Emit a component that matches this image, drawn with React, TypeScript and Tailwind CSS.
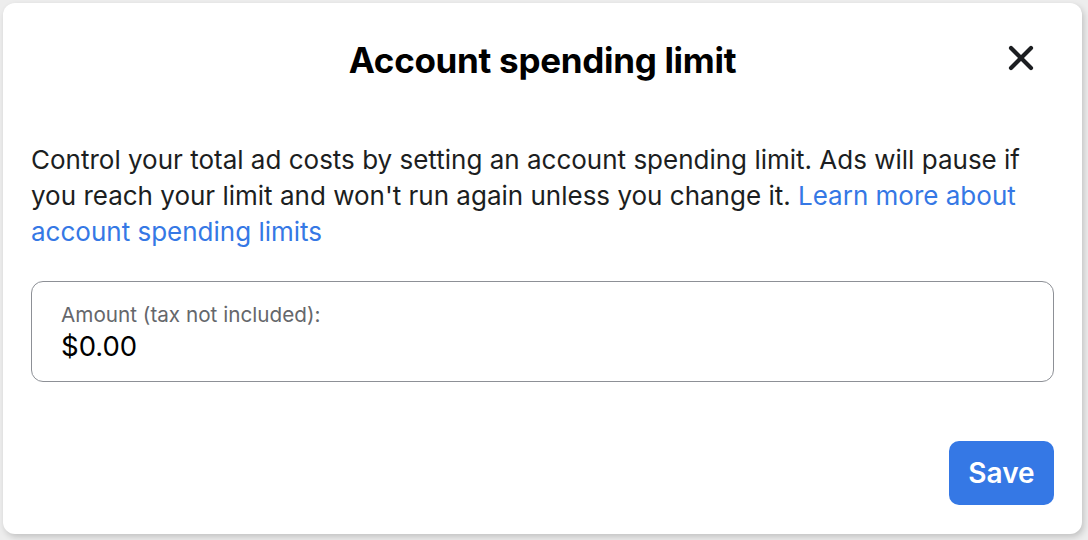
import { X } from 'lucide-react';

export default function App() {
    return (
        <div
            className="h-[540px] w-[1088px] overflow-hidden bg-[#ededed] pl-[3px] pt-[3px] text-[#1c1e21]"
            style={{ fontFamily: 'Inter, "Liberation Sans", Arial, sans-serif' }}
        >
            <div className="flex h-[531px] w-[1079px] flex-col rounded-[12px] bg-white px-[28px] shadow-[2px_3px_6px_rgba(0,0,0,0.18)]">
                <div className="grid h-[114px] grid-cols-[1fr_auto_1fr] items-center">
                    <div />
                    <h2 className="text-[35px] font-bold leading-[40px] tracking-[-0.3px] text-black">Account spending limit</h2>
                    <div className="mb-[5px] flex justify-end pr-[13px]">
                        <button className="flex h-[40px] w-[40px] items-center justify-center">
                            <X className="h-[40px] w-[40px]" strokeWidth={2.5} />
                        </button>
                    </div>
                </div>

                <p className="mt-[25px] text-[26px] leading-[36px]">
                    Control your total ad costs by setting an account spending limit. Ads will pause if you reach your limit and won't run again unless you change it.{' '}
                    <a href="#" className="text-[#3578e5]">Learn more about account spending limits</a>
                </p>

                <div className="mt-[31px] flex h-[101px] flex-col justify-center rounded-[12px] border border-[#8d9096] pl-[29px]">
                    <label className="text-[20.7px] leading-[26px] text-[#65676b]">Amount (tax not included):</label>
                    <div className="mt-[2px] text-[27.5px] leading-[32px] text-black">$0.00</div>
                </div>

                <div className="mt-[59px] flex justify-end">
                    <button className="h-[64px] w-[105px] rounded-[10px] bg-[#3578e5] text-[28px] font-semibold text-white">
                        Save
                    </button>
                </div>
            </div>
        </div>
    );
}
